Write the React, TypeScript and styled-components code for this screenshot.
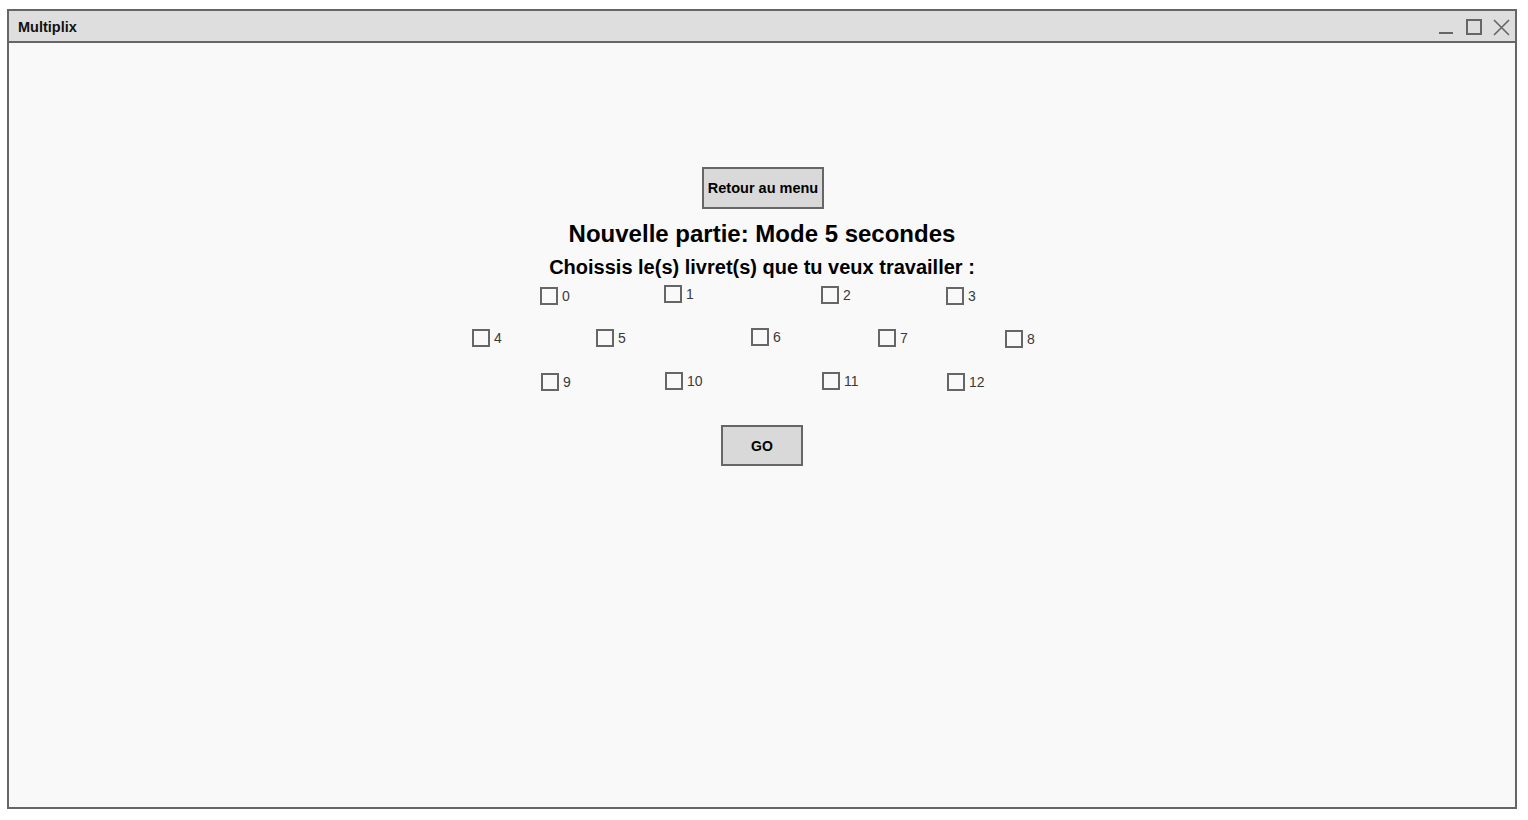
import React from "react";
import styled, { createGlobalStyle } from "styled-components";

const GlobalStyle = createGlobalStyle`
  html, body {
    margin: 0;
    padding: 0;
    background: #ffffff;
  }
  body {
    padding: 9px 0 0 7px;
    font-family: "Liberation Sans", Arial, Helvetica, sans-serif;
  }
`;

const Window = styled.div`
  box-sizing: border-box;
  width: 1510px;
  height: 800px;
  border: 2px solid #666666;
  background: #f9f9f9;
  display: flex;
  flex-direction: column;
`;

const TitleBar = styled.div`
  height: 30px;
  flex: 0 0 30px;
  border-bottom: 2px solid #666666;
  background: #dedede;
  display: flex;
  align-items: center;
  justify-content: space-between;
  padding: 0 4px 0 9px;
`;

const TitleText = styled.span`
  font-size: 14.5px;
  font-weight: bold;
  color: #111111;
  margin-top: 1px;
`;

const Controls = styled.svg`
  align-self: flex-start;
  margin-top: 7px;
  display: block;
`;

const Content = styled.main`
  flex: 1;
  display: flex;
  flex-direction: column;
  align-items: center;
  padding-top: 124px;
`;

const Button = styled.button<{ $w: number; $h: number; $size: number; $nudge?: number }>`
  box-sizing: border-box;
  width: ${(p) => p.$w}px;
  height: ${(p) => p.$h}px;
  border: 2px solid #666666;
  background: #d9d9d9;
  font-family: "Liberation Sans", Arial, sans-serif;
  font-weight: bold;
  font-size: ${(p) => p.$size}px;
  color: #000000;
  padding: 0;
  margin: 0 0 0 ${(p) => p.$nudge ?? 0}px;
  display: flex;
  align-items: center;
  justify-content: center;
  white-space: nowrap;
  cursor: pointer;
`;

const Title = styled.h1`
  margin: 11px 0 0;
  font-size: 24px;
  line-height: 28px;
  font-weight: bold;
  color: #000000;
`;

const Subtitle = styled.h2`
  margin: 7px 0 0;
  font-size: 20px;
  line-height: 24px;
  font-weight: bold;
  color: #000000;
`;

const Board = styled.div`
  width: 600px;
  margin-top: 7px;
  display: flex;
  flex-direction: column;
  gap: 25px;
`;

const Row = styled.div<{ $offset: number }>`
  display: flex;
  align-items: flex-start;
  height: 18px;
  padding-left: ${(p) => p.$offset}px;
`;

const Item = styled.label<{ $w: number; $dy: number }>`
  flex: 0 0 ${(p) => p.$w}px;
  display: flex;
  align-items: center;
  gap: 4px;
  margin-top: ${(p) => p.$dy}px;
  font-size: 14px;
  line-height: 16px;
  color: #3a3a3a;
  cursor: pointer;
`;

const Box = styled.input`
  appearance: none;
  -webkit-appearance: none;
  box-sizing: border-box;
  width: 18px;
  height: 18px;
  margin: 0;
  border: 2px solid #666666;
  background: transparent;
  border-radius: 0;
  flex: 0 0 18px;
  &:checked {
    background: #666666;
  }
`;

const GoWrap = styled.div`
  margin-top: 35px;
`;

type Cell = { n: number; x: number; dy: number };

const ROWS: { start: number; cells: Cell[] }[] = [
  {
    start: 540,
    cells: [
      { n: 0, x: 540, dy: 1 },
      { n: 1, x: 664, dy: -1 },
      { n: 2, x: 821, dy: 0 },
      { n: 3, x: 946, dy: 1 },
    ],
  },
  {
    start: 472,
    cells: [
      { n: 4, x: 472, dy: 0 },
      { n: 5, x: 596, dy: 0 },
      { n: 6, x: 751, dy: -1 },
      { n: 7, x: 878, dy: 0 },
      { n: 8, x: 1005, dy: 1 },
    ],
  },
  {
    start: 541,
    cells: [
      { n: 9, x: 541, dy: 1 },
      { n: 10, x: 665, dy: 0 },
      { n: 11, x: 822, dy: 0 },
      { n: 12, x: 947, dy: 1 },
    ],
  },
];

const BOARD_LEFT = 462;

export default function App() {
  return (
    <>
      <GlobalStyle />
      <Window>
        <TitleBar>
          <TitleText>Multiplix</TitleText>
          <Controls width="72" height="19" viewBox="0 0 72 19" fill="none" stroke="#666666">
            <path d="M0 15 H14" strokeWidth="2" />
            <rect x="28" y="2" width="14" height="14" strokeWidth="2" />
            <path d="M55 2 L70 17 M70 2 L55 17" strokeWidth="1.6" />
          </Controls>
        </TitleBar>
        <Content>
          <Button $w={122} $h={42} $size={14.5} $nudge={2}>Retour au menu</Button>
          <Title>Nouvelle partie: Mode 5 secondes</Title>
          <Subtitle>Choissis le(s) livret(s) que tu veux travailler :</Subtitle>
          <Board>
            {ROWS.map((row, ri) => (
              <Row key={ri} $offset={row.start - BOARD_LEFT}>
                {row.cells.map((c, ci) => {
                  const next = row.cells[ci + 1];
                  const w = next ? next.x - c.x : 40;
                  return (
                    <Item key={c.n} $w={w} $dy={c.dy}>
                      <Box type="checkbox" />
                      <span>{c.n}</span>
                    </Item>
                  );
                })}
              </Row>
            ))}
          </Board>
          <GoWrap>
            <Button $w={82} $h={41} $size={14}>GO</Button>
          </GoWrap>
        </Content>
      </Window>
    </>
  );
}
